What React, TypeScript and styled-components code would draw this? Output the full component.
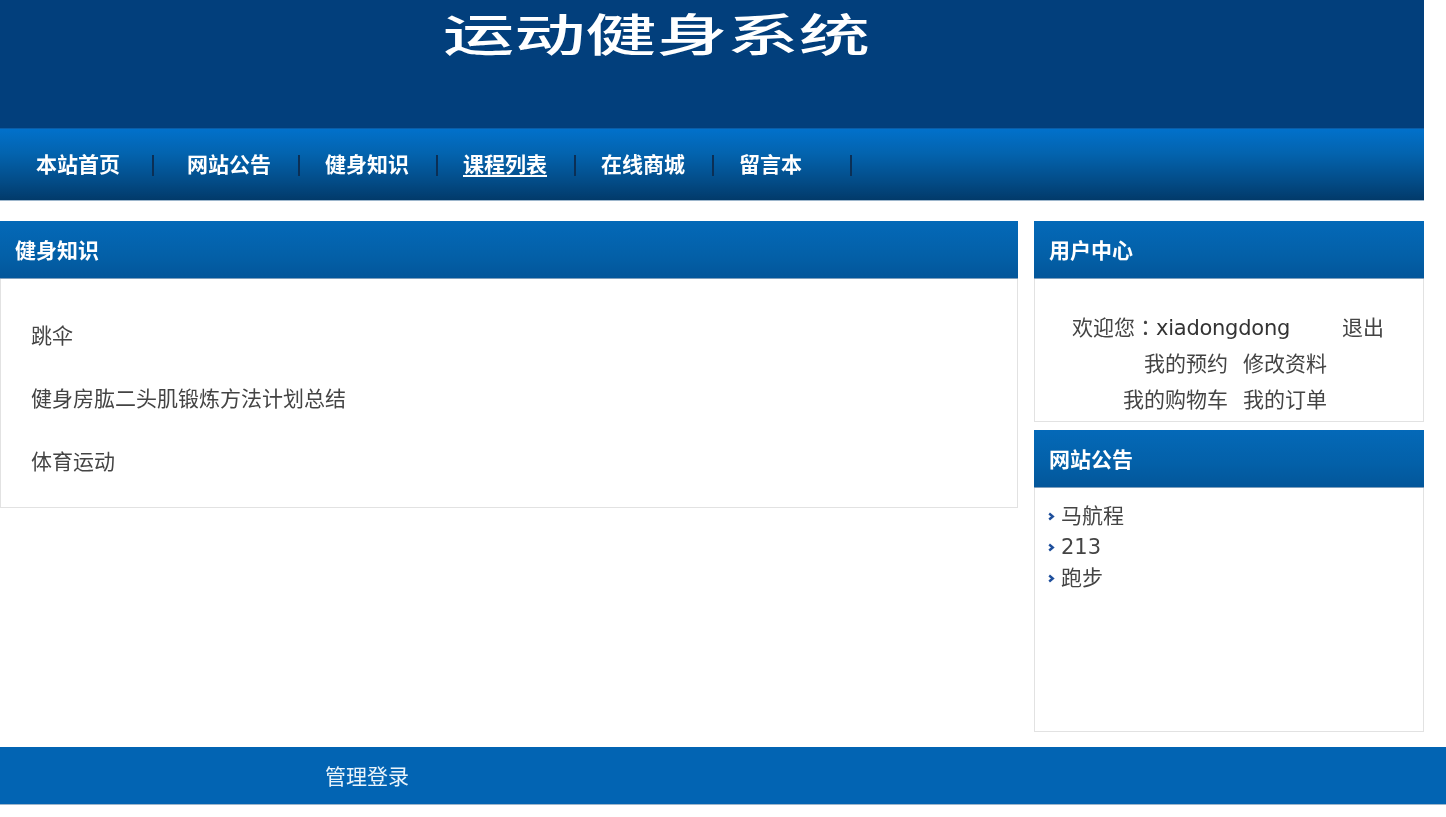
import React from "react";
import styled, { createGlobalStyle } from "styled-components";

const Global = createGlobalStyle`
  html, body { margin: 0; padding: 0; background: #fff; }
  body { font-family: "DejaVu Sans", "Noto Sans CJK SC", sans-serif; font-size: 21px; color: #444; overflow: hidden; }
  a { color: inherit; text-decoration: none; }
`;
const Page = styled.div`width: 1446px; height: 817px; overflow: hidden; filter: blur(0.45px);`;
const Wrap = styled.div`width: 1424px;`;
const Banner = styled.header`
  height: 128px; background: #023f7c; padding-left: 443px; box-sizing: border-box;
`;
const Title = styled.h1`
  margin: 0; display: inline-block; font: 500 45px/66px "Noto Sans CJK SC", sans-serif; color: #fff;
  white-space: nowrap; transform: scaleX(1.581); transform-origin: 0 0;
`;
const Nav = styled.nav`
  height: 73px; display: flex; align-items: center; padding: 0 0 0 36px; box-sizing: border-box;
  background: linear-gradient(#0171cb 0%, #0363ae 35%, #034b86 75%, #023a6a 100%);
  border-top: 1px solid #0a5da8; border-bottom: 1px solid #9db6cc;
`;
const NavItem = styled.a<{ $w: number; $active?: boolean }>`
  width: ${p => p.$w}px; margin-bottom: 3px; font: 700 21px/28px "Noto Sans CJK SC", sans-serif; color: #fff; white-space: nowrap;
  text-decoration: ${p => (p.$active ? "underline" : "none")}; text-underline-offset: 3px;
`;
const Sep = styled.i<{ $after: number }>`
  width: 2px; height: 21px; margin-top: 2px; background: #0b2f55; margin-right: ${p => p.$after}px; flex: none;
`;
const Columns = styled.div`
  display: flex; justify-content: space-between; padding-top: 20px; height: 546px; box-sizing: border-box;
`;
const LeftCol = styled.main`width: 1018px;`;
const RightCol = styled.aside`width: 390px; display: flex; flex-direction: column; gap: 8px;`;
const Panel = styled.section<{ $h: number }>`
  height: ${p => p.$h}px; box-sizing: border-box; background: #fff;
  border: 1px solid #e2e2e2; border-top: 0; display: flex; flex-direction: column;
`;
const PanelHead = styled.h2`
  margin: 0 -1px; flex: none; height: 58px; box-sizing: border-box; padding-left: 15px;
  font: 700 21px/56px "Noto Sans CJK SC", sans-serif; color: #fff;
  background: linear-gradient(#0469b8, #0360a8 60%, #03569a);
  border-bottom: 1px solid #7f9fbd;
`;
const Articles = styled.ul`
  list-style: none; margin: 0; padding: 41px 0 0 30px; display: flex; flex-direction: column; gap: 35px;
`;
const Article = styled.li`
  font: 400 21px/28px "Noto Sans CJK SC", sans-serif; color: #444;
`;
const UserBox = styled.div`padding-top: 31px; display: flex; flex-direction: column; align-items: flex-start;`;
const UserLine = styled.div<{ $pl: number }>`
  height: 36px; line-height: 36px; white-space: pre; padding-left: ${p => p.$pl}px; display: flex; gap: 15px;
  color: #444;
`;
const Colon = styled.span`font-family: "Noto Sans CJK TC", sans-serif; line-height: 0;`;
const Name = styled.span`color: #333; letter-spacing: -0.25px;`;
const Logout = styled.a`margin-left: 37px;`;
const Links = styled.ul`
  list-style: none; margin: 0; padding: 13px 0 0 13px;
`;
const LinkRow = styled.li`
  height: 31px; line-height: 31px; display: flex; align-items: center; gap: 6px; color: #444;
`;
const Foot = styled.footer`
  height: 58px; width: 1446px; box-sizing: border-box; background: #0264b3; padding-left: 325px;
  border-bottom: 1px solid #9db6cc; font: 400 21px/56px "Noto Sans CJK SC", sans-serif; color: #eaf4fb;
`;

const Arrow = () => (
  <svg width="7" height="9" viewBox="0 0 7 9" fill="none">
    <path d="M1.2 1.5 L4.8 4.5 L1.2 7.5" stroke="#1f4f9c" strokeWidth="2.4" />
  </svg>
);

const navs: [string, number, number, boolean?][] = [
  ["本站首页", 116, 33],
  ["网站公告", 111, 25],
  ["健身知识", 111, 25],
  ["课程列表", 111, 25, true],
  ["在线商城", 111, 25],
  ["留言本", 111, 0],
];

export default function App() {
  return (
    <Page>
      <Global />
      <Wrap>
        <Banner><Title>运动健身系统</Title></Banner>
        <Nav>
          {navs.map(([t, w, a, act]) => (
            <React.Fragment key={t}>
              <NavItem href="#" $w={w} $active={act}>{t}</NavItem>
              <Sep $after={a} />
            </React.Fragment>
          ))}
        </Nav>
        <Columns>
          <LeftCol>
            <Panel $h={287}>
              <PanelHead>健身知识</PanelHead>
              <Articles>
                <Article>跳伞</Article>
                <Article>健身房肱二头肌锻炼方法计划总结</Article>
                <Article>体育运动</Article>
              </Articles>
            </Panel>
          </LeftCol>
          <RightCol>
            <Panel $h={201}>
              <PanelHead>用户中心</PanelHead>
              <UserBox>
                <UserLine $pl={37}><span>欢迎您<Colon>：</Colon><Name>xiadongdong</Name></span><Logout href="#">退出</Logout></UserLine>
                <UserLine $pl={109}><a href="#">我的预约</a><a href="#">修改资料</a></UserLine>
                <UserLine $pl={88}><a href="#">我的购物车</a><a href="#">我的订单</a></UserLine>
              </UserBox>
            </Panel>
            <Panel $h={302}>
              <PanelHead>网站公告</PanelHead>
              <Links>
                <LinkRow><Arrow />马航程</LinkRow>
                <LinkRow><Arrow />213</LinkRow>
                <LinkRow><Arrow />跑步</LinkRow>
              </Links>
            </Panel>
          </RightCol>
        </Columns>
      </Wrap>
      <Foot>管理登录</Foot>
    </Page>
  );
}
